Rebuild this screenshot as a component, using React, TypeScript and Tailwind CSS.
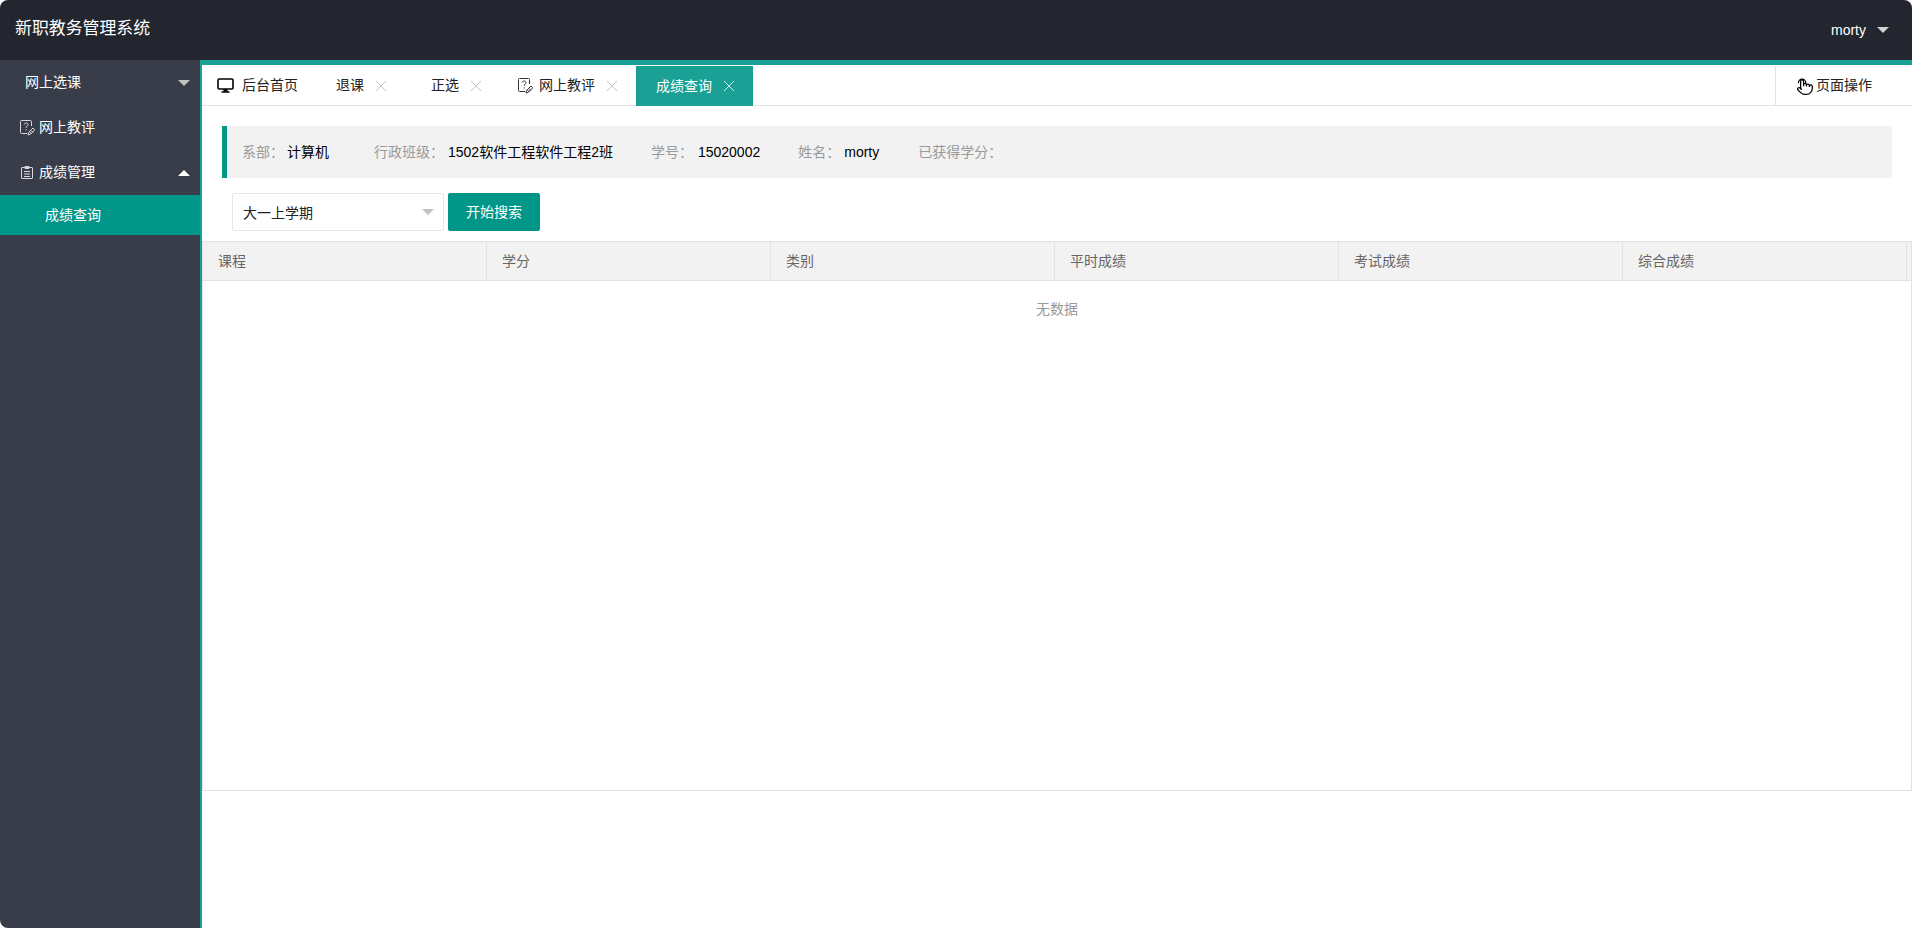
import { ReactNode } from 'react';

const columns = ['课程', '学分', '类别', '平时成绩', '考试成绩', '综合成绩'];

const studentInfo = [
    { label: '系部：', value: '计算机', className: 'ml-[15px]', gap: 'mr-[3px]' },
    { label: '行政班级：', value: '1502软件工程软件工程2班', className: 'ml-[45px]', gap: 'mr-[4px]' },
    { label: '学号：', value: '15020002', className: 'ml-[38px]', gap: 'mr-[5px]' },
    { label: '姓名：', value: 'morty', className: 'ml-[38px]', gap: 'mr-[4px]' },
    { label: '已获得学分：', value: '', className: 'ml-[39px]', gap: 'mr-[4px]' },
];

function Caret({ up, className }: { up?: boolean; className: string }) {
    return (
        <svg width="12" height="6" viewBox="0 0 12 6" className={className}>
            <path d={up ? 'M6 0 12 6H0Z' : 'M0 0H12L6 6Z'} fill="currentColor" />
        </svg>
    );
}

function CloseIcon({ className = 'text-[#c2c2c2]' }: { className?: string }) {
    return (
        <svg width="10" height="10" viewBox="0 0 10 10" className={className}>
            <path d="M0 0 10 10M10 0 0 10" stroke="currentColor" strokeWidth="1" fill="none" />
        </svg>
    );
}

function ReviewIcon({ className }: { className: string }) {
    return (
        <svg width="15" height="16" viewBox="0 0 15 16" className={className} fill="none" stroke="currentColor">
            <path d="M7 13.500H1.500a1 1 0 0 1-1-1V1.500a1 1 0 0 1 1-1h9a1 1 0 0 1 1 1V6" strokeWidth="1" />
            <path d="M4.200 4.500C4.300 2.600 8 2.500 8 4.500 8 6 6.200 6 6.200 7.800M6.200 9.300v1.200" strokeWidth="1" />
            <path d="M8 15 8.500 12.500 13 8l1.800 1.800-4.500 4.500ZM9.500 12l2 2M11 10.500l2 2" strokeWidth="1" />
        </svg>
    );
}

function ClipboardIcon() {
    return (
        <svg width="12" height="13" viewBox="0 0 12 13" className="text-[#d8d8d8]" fill="none" stroke="currentColor">
            <rect x="0.500" y="1.500" width="11" height="11" rx="0.500" />
            <path d="M4 .5h4v2H4ZM3 5.500h6M3 8h6M3 10.500h6" />
        </svg>
    );
}

function MonitorIcon() {
    return (
        <svg width="17" height="15" viewBox="0 0 17 15" className="text-black" fill="none" stroke="currentColor">
            <rect x="1" y="1" width="15" height="10" rx="1.200" strokeWidth="1.600" />
            <path d="M6.800 11.500h3.400v1.800H6.800Z" fill="currentColor" strokeWidth="0.600" />
            <path d="M4.500 14h8" strokeWidth="1.400" />
        </svg>
    );
}

// hand with a ring round the fingertip
function HandIcon() {
    return (
        <svg width="16" height="20" viewBox="1 -3 22 27" className="text-black" fill="none" stroke="currentColor" strokeWidth="1.700" strokeLinecap="round" strokeLinejoin="round">
            <path d="M3 6A5 5 0 1 1 13 6" />
            <path d="M18 11v-1a2 2 0 0 0-2-2a2 2 0 0 0-2 2" />
            <path d="M14 10V9a2 2 0 0 0-2-2a2 2 0 0 0-2 2v1" />
            <path d="M10 9.500V4a2 2 0 0 0-2-2a2 2 0 0 0-2 2v10" />
            <path d="M18 11a2 2 0 1 1 4 0v3a8 8 0 0 1-8 8h-2c-2.800 0-4.500-.860-5.990-2.340l-3.600-3.600a2 2 0 0 1 2.830-2.820L7 15" />
        </svg>
    );
}

function SideItem({ children, className = '' }: { children: ReactNode; className?: string }) {
    return <div className={`h-[45px] flex items-center relative text-white ${className}`}>{children}</div>;
}

export default function App() {
    return (
        <div className="w-full h-[928px] flex flex-col overflow-hidden rounded-[8px] bg-white text-[14px] font-['Liberation_Sans','Noto_Sans_CJK_SC',sans-serif]">
            {/* top bar */}
            <header className="h-[60px] shrink-0 bg-[#23262e] flex items-center justify-between pl-[15px] pr-[23px] text-white">
                <span className="text-[16.900px] leading-none -mt-[2px]">新职教务管理系统</span>
                <div className="flex items-center">
                    <span className="ml-px">morty</span>
                    <Caret className="ml-[11px] text-[#d2d2d2]" />
                </div>
            </header>

            <div className="flex-1 flex min-h-0">
                {/* left menu */}
                <aside className="w-[200px] shrink-0 bg-[#393d49]">
                    <SideItem className="pl-[25px]">
                        网上选课
                        <Caret className="absolute right-[10px] top-[20px] text-[#c2c2c2]" />
                    </SideItem>
                    <SideItem className="pl-[20px]">
                        <ReviewIcon className="text-[#d8d8d8]" />
                        <span className="ml-[4px]">网上教评</span>
                    </SideItem>
                    <SideItem className="pl-[21px]">
                        <ClipboardIcon />
                        <span className="ml-[6px]">成绩管理</span>
                        <Caret up className="absolute right-[10px] top-[20px] text-white" />
                    </SideItem>
                    <div className="h-[40px] bg-[#009688] text-white flex items-center pl-[45px]">成绩查询</div>
                </aside>

                <main className="flex-1 min-w-0 flex flex-col border-l-2 border-t-[5px] border-[#1aa094]">
                    {/* tab strip */}
                    <div className="h-[41px] shrink-0 flex border-b border-[#e2e2e2] pt-px text-[#222]">
                        <div className="flex items-center w-[114px] pl-[15px]">
                            <MonitorIcon />
                            <span className="ml-[8px]">后台首页</span>
                        </div>
                        <div className="flex items-center w-[95px] pl-[20px]">
                            <span>退课</span>
                            <CloseIcon className="ml-[12px] text-[#c2c2c2]" />
                        </div>
                        <div className="flex items-center w-[88px] pl-[20px]">
                            <span>正选</span>
                            <CloseIcon className="ml-[12px] text-[#c2c2c2]" />
                        </div>
                        <div className="flex items-center w-[137px] pl-[19px]">
                            <ReviewIcon className="text-[#333]" />
                            <span className="ml-[6px]">网上教评</span>
                            <CloseIcon className="ml-[12px] text-[#c2c2c2]" />
                        </div>
                        <div className="flex items-center w-[117px] -mb-px pl-[20px] bg-[#1aa094] text-white">
                            <span>成绩查询</span>
                            <CloseIcon className="ml-[12px] text-[#c9e8e4]" />
                        </div>
                        <div className="ml-auto w-[137px] flex items-center border-l border-[#e2e2e2] pl-[21px]">
                            <HandIcon />
                            <span className="ml-[3px]">页面操作</span>
                        </div>
                    </div>

                    {/* student info */}
                    <div className="mt-[20px] ml-[20px] mr-[20px] h-[52px] shrink-0 flex items-center bg-[#f2f2f2] border-l-[5px] border-[#009688] rounded-r-[2px]">
                        {studentInfo.map((item) => (
                            <div key={item.label} className={`flex ${item.className}`}>
                                <span className={`text-[#999] ${item.gap}`}>{item.label}</span>
                                <span className="text-black">{item.value}</span>
                            </div>
                        ))}
                    </div>

                    {/* search row */}
                    <div className="mt-[15px] ml-[30px] flex shrink-0 gap-[4px]">
                        <div className="w-[212px] h-[38px] bg-white border border-[#e6e6e6] rounded-[2px] flex items-center justify-between pl-[10px] pr-[9px] text-[#222]">
                            <span className="mt-[2px]">大一上学期</span>
                            <Caret className="text-[#c2c2c2]" />
                        </div>
                        <button className="h-[38px] px-[18px] bg-[#009688] text-white rounded-[2px]">开始搜索</button>
                    </div>

                    {/* score table */}
                    <div className="mt-[10px] h-[550px] shrink-0 border border-[#e2e2e2]">
                        <div className="h-[39px] bg-[#f2f2f2] border-b border-[#e2e2e2] flex text-[#666]">
                            {columns.map((name) => (
                                <div key={name} className="w-[284px] flex items-center pl-[15px] border-r border-[#e2e2e2]">
                                    {name}
                                </div>
                            ))}
                        </div>
                        <div className="text-center text-[#999] pt-[18px]">无数据</div>
                    </div>
                </main>
            </div>
        </div>
    );
}
